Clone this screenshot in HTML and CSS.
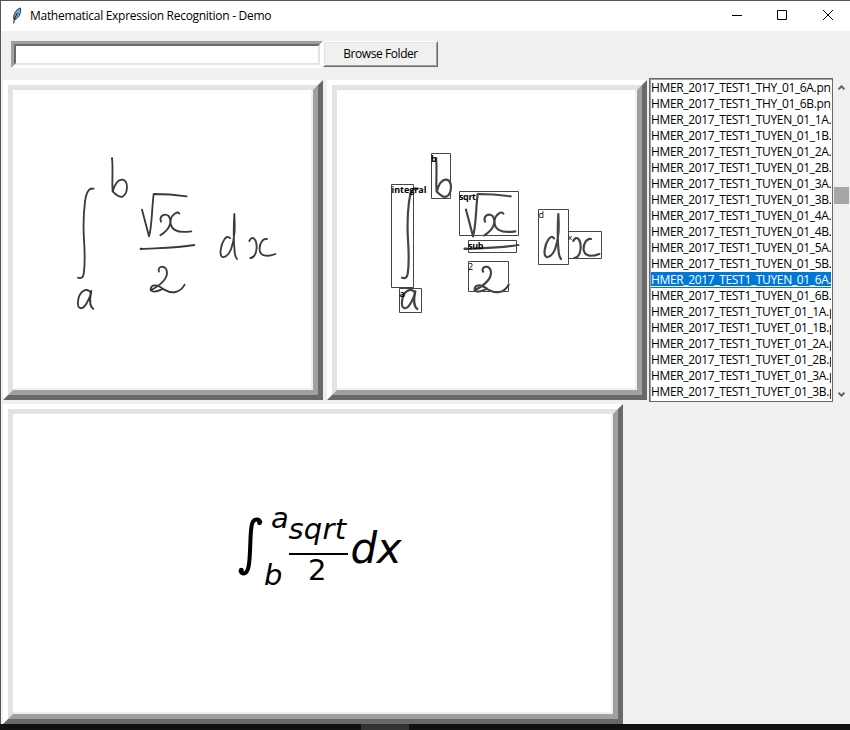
FILE: index.html
```html
<!DOCTYPE html>
<html lang="en">
<head>
<meta charset="utf-8">
<title>Mathematical Expression Recognition - Demo</title>
<link rel="stylesheet" href="styles.css">
</head>
<body>
<div class="window">
  <header class="titlebar">
    <svg class="feather" viewBox="0 0 12 18"><path d="M9.500 1C6 1.800 3 5.500 2.500 11l1.300 1.800C8 11 10.300 6 9.500 1Z" fill="#6aa8e6" stroke="#20262e" stroke-width=".9"/><path d="M6.500 6 3.200 12.500 2.800 16.500" fill="none" stroke="#111" stroke-width="1"/></svg>
    <h1 class="title">Mathematical Expression Recognition - Demo</h1>
    <svg class="controls" viewBox="0 0 110 12"><g fill="none" stroke="#000"><path d="M0 6.500h10M45.500 1.500h9v9h-9zM91 1l10 10M101 1 91 11"/></g></svg>
  </header>
  <div class="toolbar">
    <div class="entry"><input class="entry-field" type="text" aria-label="Folder"></div>
    <button class="browse" type="button">Browse Folder</button>
  </div>
  <main class="content">
    <div class="top-row">
      <section class="panel"><div class="bevel">
        <svg class="picture" viewBox="0 0 300 300">
          <defs>
            <g id="formula" fill="none" stroke-linecap="round" stroke-linejoin="round">
              <path d="M93 146Q79 151 75 185C70 225 69 252 72 300C75 345 76 370 71 402Q68 418 54 413"/>
              <path d="M95 146h6"/>
              <path d="M156 55C160 85 155 123 158 155C165 130 174 117 188 119C207 124 203 160 189 169Q177 175 159 155"/>
              <path d="M246 209Q256 246 267 289C276 262 275 210 281 162Q330 162 380 169"/>
              <path d="M303 245C297 228 313 218 326 228C337 246 330 268 301 286M358 221C354 212 336 222 332 239C328 267 348 281 394 274"/>
              <path d="M242 327C290 324 350 324 403 315"/>
              <path d="M297 395C291 381 310 374 319 388C327 410 306 433 272 451C270 430 294 433 311 448C337 463 360 459 374 434M272 450Q282 461 309 446"/>
              <path d="M93 463C90 442 62 446 55 477C49 511 68 513 82 486Q91 472 94 453C89 478 87 498 100 507"/>
              <path d="M510 295C500 281 485 305 482 330C478 361 500 356 513 328C526 292 525 260 523 222Q519 290 524 335Q525 350 531 357"/>
              <path d="M568 303C577 283 591 299 590 324Q587 353 571 354M621 297C608 294 597 312 599 331C603 351 626 350 646 342"/>
              <path d="M242 326h4M92 146h2M156 55h1"/>
            </g>
          </defs>
          <use href="#formula" class="ink" transform="translate(47 50) scale(.33333)"/>
        </svg>
      </div></section>
      <section class="panel"><div class="bevel">
        <svg class="picture" viewBox="0 0 300 300">
          <use href="#formula" class="ink bold" transform="translate(47 50) scale(.33333)"/>
          <g class="boxes">
            <path d="M94.500 63.500h19v45h-19zM54.500 94.500h22v103h-22zM122.500 101.500h59v44h-59zM131.500 150.500h48v12h-48zM131.500 171.500h40v30h-40zM62.500 198.500h22v24h-22zM201.500 119.500h30v55h-30zM231.500 141.500h33v27h-33z"/>
          </g>
          <g class="labels">
            <text x="94" y="72">b</text>
            <text x="54.500" y="103" textLength="35">integral</text>
            <text x="122" y="110" textLength="17">sqrt</text>
            <text x="131" y="159" textLength="15.500">sub</text>
            <text x="131" y="180" class="thin">2</text>
            <text x="62.500" y="207">a</text>
            <text x="201.500" y="128" class="thin">d</text>
            <text x="231" y="150" class="thin small">x</text>
          </g>
        </svg>
      </div></section>
      <div class="listbox">
        <ul class="files">
          <li>HMER_2017_TEST1_THY_01_6A.png</li>
          <li>HMER_2017_TEST1_THY_01_6B.png</li>
          <li>HMER_2017_TEST1_TUYEN_01_1A.png</li>
          <li>HMER_2017_TEST1_TUYEN_01_1B.png</li>
          <li>HMER_2017_TEST1_TUYEN_01_2A.png</li>
          <li>HMER_2017_TEST1_TUYEN_01_2B.png</li>
          <li>HMER_2017_TEST1_TUYEN_01_3A.png</li>
          <li>HMER_2017_TEST1_TUYEN_01_3B.png</li>
          <li>HMER_2017_TEST1_TUYEN_01_4A.png</li>
          <li>HMER_2017_TEST1_TUYEN_01_4B.png</li>
          <li>HMER_2017_TEST1_TUYEN_01_5A.png</li>
          <li>HMER_2017_TEST1_TUYEN_01_5B.png</li>
          <li class="selected">HMER_2017_TEST1_TUYEN_01_6A.png</li>
          <li>HMER_2017_TEST1_TUYEN_01_6B.png</li>
          <li>HMER_2017_TEST1_TUYET_01_1A.png</li>
          <li>HMER_2017_TEST1_TUYET_01_1B.png</li>
          <li>HMER_2017_TEST1_TUYET_01_2A.png</li>
          <li>HMER_2017_TEST1_TUYET_01_2B.png</li>
          <li>HMER_2017_TEST1_TUYET_01_3A.png</li>
          <li>HMER_2017_TEST1_TUYET_01_3B.png</li>
        </ul>
      </div>
      <div class="scrollbar">
        <svg class="arrow" viewBox="0 0 7 5"><path d="M.5 4.300 3.500 1.300l3 3"/></svg>
        <div class="thumb"></div>
        <svg class="arrow" viewBox="0 0 7 5"><path d="M.5.7l3 3 3-3"/></svg>
      </div>
    </div>
    <section class="panel wide"><div class="bevel">
      <svg class="picture result" viewBox="0 0 600 300">
        <path class="integral" d="M247.500 109C246.500 104.500 241.500 104.300 239.300 109C236.500 116 238 142 235.500 153C233.800 160.500 228.500 161.500 227.300 156"/>
        <circle cx="246.500" cy="108.800" r="2.400"/><circle cx="228.300" cy="156.200" r="2.400"/>
        <text x="258" y="114" class="script">a</text>
        <text x="251" y="171" class="script">b</text>
        <text x="275.500" y="125" class="script" textLength="57.500">sqrt</text>
        <rect x="276" y="139" width="59" height="2"/>
        <text x="295" y="166" class="script upright">2</text>
        <text x="337.500" y="149" class="base" textLength="51">dx</text>
      </svg>
    </div></section>
  </main>
  <footer class="taskbar"><div class="task"></div></footer>
</div>
</body>
</html>
```

FILE: styles.css
```css
* { box-sizing: border-box; }

body {
  margin: 0;
  background: #f0f0f0;
  color: #000;
  font: 12px/16px "Open Sans", "Noto Sans", sans-serif;
}

.window {
  display: flex;
  flex-direction: column;
  width: 850px;
  height: 730px;
  overflow: hidden;
  border-top: 1px solid #55555a;
}

.titlebar,
.toolbar,
.content { border-left: 1px solid #55555a; }

.titlebar {
  display: flex;
  flex: none;
  align-items: center;
  height: 30px;
  padding: 0 8px 0 10px;
  background: #fff;
}

.feather { width: 12px; height: 18px; margin-right: 7px; }

.title {
  margin: 0;
  font-size: 12px;
  font-weight: 400;
  letter-spacing: -0.29px;
  white-space: nowrap;
}

.controls { width: 110px; height: 12px; margin: -2px 0 0 auto; }

.toolbar {
  display: flex;
  flex: none;
  height: 47px;
  padding: 10px 0 0 10px;
}

.entry {
  width: 312px;
  height: 27px;
  border: 3px solid;
  border-color: #a0a0a0 #fff #fff #a0a0a0;
}

.entry-field {
  display: block;
  width: 100%;
  height: 100%;
  padding: 0;
  border: 2px solid;
  border-color: #696969 #e3e3e3 #e3e3e3 #696969;
  border-radius: 0;
  background: #fff;
  outline: none;
}

.browse {
  width: 115px;
  height: 26px;
  padding: 0;
  border: 1px solid;
  border-color: #fff #696969 #696969 #fff;
  background: #f0f0f0;
  box-shadow: inset 1px 1px #e3e3e3, inset -1px -1px #a0a0a0;
  color: #000;
  font: inherit;
  letter-spacing: -0.42px;
}

.content {
  display: flex;
  flex: none;
  flex-direction: column;
  height: 646px;
  padding-left: 2px;
}

.top-row { display: flex; height: 326px; }

.panel {
  flex: none;
  width: 320px;
  height: 320px;
  margin: 2px 4px 0 0;
  border: 5px solid;
  border-color: #fff #696969 #696969 #fff;
}

.panel + .panel { margin-right: 2px; }

.panel.wide { width: 620px; margin-top: 0; }

.bevel {
  height: 100%;
  border: 5px solid;
  border-color: #e3e3e3 #a0a0a0 #a0a0a0 #e3e3e3;
  background: #fff;
  box-shadow: inset -2px -2px #f0f0f0;
}

.picture { display: block; width: 100%; height: 100%; }

.ink { stroke: #3a3a3a; stroke-width: 5.5px; }
.ink.bold { stroke: #444; stroke-width: 6.5px; }

.boxes { fill: none; stroke: #444; stroke-width: 1px; }

.labels { font: bold 9px/1 "Open Sans", sans-serif; }
.labels .thin { font-weight: 400; }
.labels .small { font-size: 8px; }

.result { font-family: "DejaVu Sans", sans-serif; font-style: italic; }
.script { font-size: 29px; }
.upright { font-style: normal; }
.base { font-size: 42px; }
.integral { fill: none; stroke: #000; stroke-width: 4px; }

.listbox {
  flex: none;
  width: 184px;
  height: 324px;
  border: 1px solid #696969;
  background: #fff;
  box-shadow: inset 1px 1px #a0a0a0;
}

.files {
  height: 322px;
  margin: 0 1px;
  padding: 1px 0;
  overflow: hidden;
  list-style: none;
  letter-spacing: -0.34px;
}

.files li {
  height: 16px;
  overflow: hidden;
  white-space: nowrap;
}

.files .selected {
  background: #0078d7;
  color: #fff;
  text-decoration: underline;
  text-underline-offset: 2px;
  text-decoration-skip-ink: none;
}

.scrollbar {
  display: flex;
  flex: 1;
  flex-direction: column;
  align-items: center;
  height: 324px;
  padding: 7px 0 5px;
}

.arrow {
  width: 7px;
  height: 5px;
  fill: none;
  stroke: #606060;
  stroke-width: 2px;
}

.thumb {
  width: 15px;
  height: 17px;
  margin: 97px 0 auto;
  background: #a6a6a6;
}

.taskbar {
  flex: none;
  height: 6px;
  padding-left: 361px;
  background: #111;
}

.task { width: 48px; height: 6px; background: #333; }
```
